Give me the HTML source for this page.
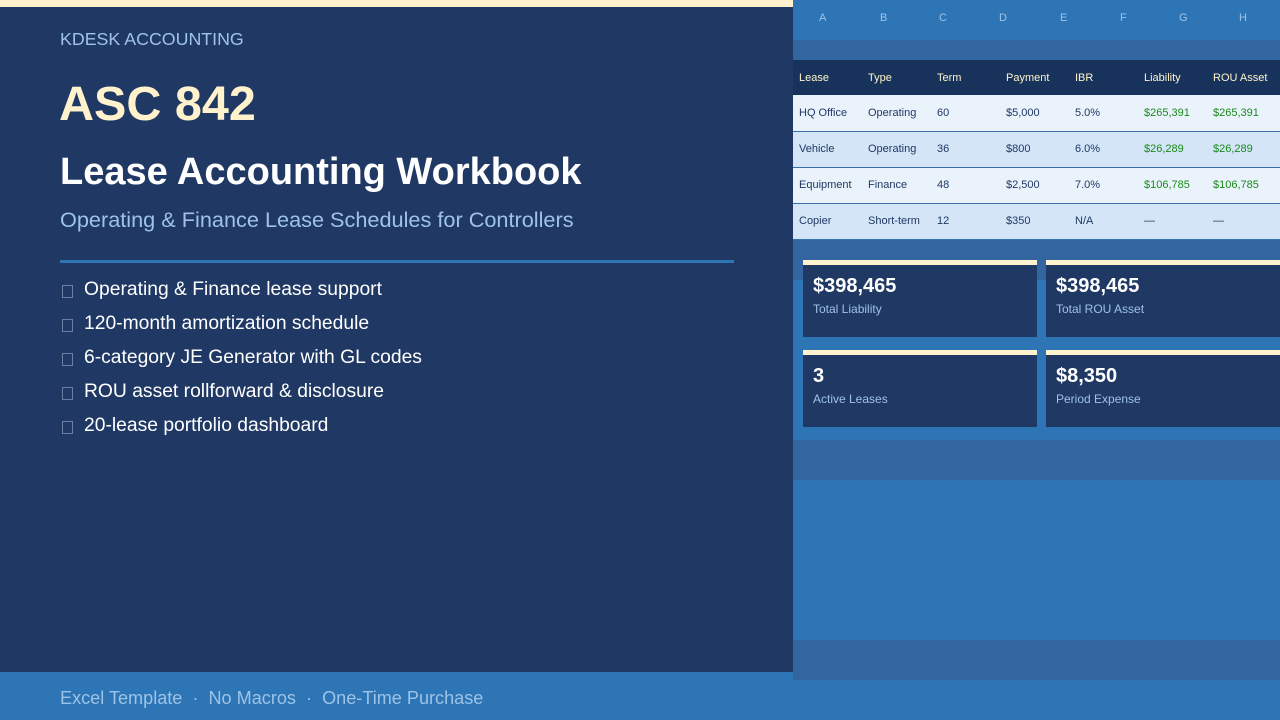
<!DOCTYPE html>
<html><head><style>
*{margin:0;padding:0;box-sizing:border-box}
body{width:1280px;height:720px;overflow:hidden;background:#2e75b6;font-family:"Liberation Sans",Arial,sans-serif;position:relative}
.left{position:absolute;left:0;top:0;width:793px;height:672px;background:#203864}
.stripe{position:absolute;left:0;top:0;width:793px;height:7px;background:#fff2cc}
.abs{position:absolute;white-space:nowrap}
.band{position:absolute;left:793px;width:487px;height:40px;background:#3366a0}
.cols span{position:absolute;top:12px;font-size:11px;color:#9dc3e6}
table{position:absolute;left:793px;top:60px;width:487px;border-collapse:collapse;font-size:11px}
td{height:36px;padding-left:6px;color:#203864}
tr.h td{background:#17335c;color:#fff2cc;height:35px}
tr.a td{background:#eaf3fb}
tr.b td{background:#d3e5f7}
tr.a td,tr.b td{border-bottom:1px solid #3b6ea8;height:36px}
tr.l td{border-bottom:none;height:36px}
.g{color:#1a8a1a!important}
.card{position:absolute;width:234px;height:77px;background:#203864;border-top:5px solid #fff2cc;padding:9px 10px}
.card b{display:block;color:#fff;font-size:20px;line-height:24px}
.card i{display:block;font-style:normal;color:#9dc3e6;font-size:12px;margin-top:4px}
.feat{position:absolute;left:60px;font-size:19.3px;color:#fff}
.feat:before{content:"";position:absolute;left:2px;top:6px;width:9px;height:11px;border:1px solid #6d7fa0}
.feat span{margin-left:24px}
</style></head><body>
<div class="left"></div><div class="stripe"></div>
<div class="abs" style="left:60px;top:29px;font-size:17.8px;color:#9dc3e6">KDESK ACCOUNTING</div>
<div class="abs" style="left:59px;top:76px;font-size:48.5px;font-weight:bold;color:#fff2cc">ASC 842</div>
<div class="abs" style="left:60px;top:151px;font-size:38px;font-weight:bold;color:#fff">Lease Accounting Workbook</div>
<div class="abs" style="left:60px;top:207px;font-size:21.7px;color:#9dc3e6">Operating &amp; Finance Lease Schedules for Controllers</div>
<div class="abs" style="left:60px;top:260px;width:674px;height:3px;background:#2e75b6"></div>
<div class="feat" style="top:279px"><span>Operating &amp; Finance lease support</span></div>
<div class="feat" style="top:313px"><span>120-month amortization schedule</span></div>
<div class="feat" style="top:347px"><span>6-category JE Generator with GL codes</span></div>
<div class="feat" style="top:381px"><span>ROU asset rollforward &amp; disclosure</span></div>
<div class="feat" style="top:415px"><span>20-lease portfolio dashboard</span></div>
<div class="abs" style="left:60px;top:688px;font-size:18.1px;color:#9dc3e6">Excel Template &nbsp;·&nbsp; No Macros &nbsp;·&nbsp; One-Time Purchase</div>
<div class="band" style="top:40px"></div>
<div class="band" style="top:240px"></div>
<div class="band" style="top:440px"></div>
<div class="band" style="top:640px"></div>
<div class="cols">
<span style="left:819px">A</span><span style="left:880px">B</span><span style="left:939px">C</span><span style="left:999px">D</span><span style="left:1060px">E</span><span style="left:1120px">F</span><span style="left:1179px">G</span><span style="left:1239px">H</span>
</div>
<table>
<colgroup><col style="width:69px"><col style="width:69px"><col style="width:69px"><col style="width:69px"><col style="width:69px"><col style="width:69px"><col></colgroup>
<tr class="h"><td>Lease</td><td>Type</td><td>Term</td><td>Payment</td><td>IBR</td><td>Liability</td><td>ROU Asset</td></tr>
<tr class="a"><td>HQ Office</td><td>Operating</td><td>60</td><td>$5,000</td><td>5.0%</td><td class="g">$265,391</td><td class="g">$265,391</td></tr>
<tr class="b"><td>Vehicle</td><td>Operating</td><td>36</td><td>$800</td><td>6.0%</td><td class="g">$26,289</td><td class="g">$26,289</td></tr>
<tr class="a"><td>Equipment</td><td>Finance</td><td>48</td><td>$2,500</td><td>7.0%</td><td class="g">$106,785</td><td class="g">$106,785</td></tr>
<tr class="b l"><td>Copier</td><td>Short-term</td><td>12</td><td>$350</td><td>N/A</td><td>—</td><td>—</td></tr>
</table>
<div class="card" style="left:803px;top:260px"><b>$398,465</b><i>Total Liability</i></div>
<div class="card" style="left:1046px;top:260px"><b>$398,465</b><i>Total ROU Asset</i></div>
<div class="card" style="left:803px;top:350px"><b>3</b><i>Active Leases</i></div>
<div class="card" style="left:1046px;top:350px"><b>$8,350</b><i>Period Expense</i></div>
</body></html>
